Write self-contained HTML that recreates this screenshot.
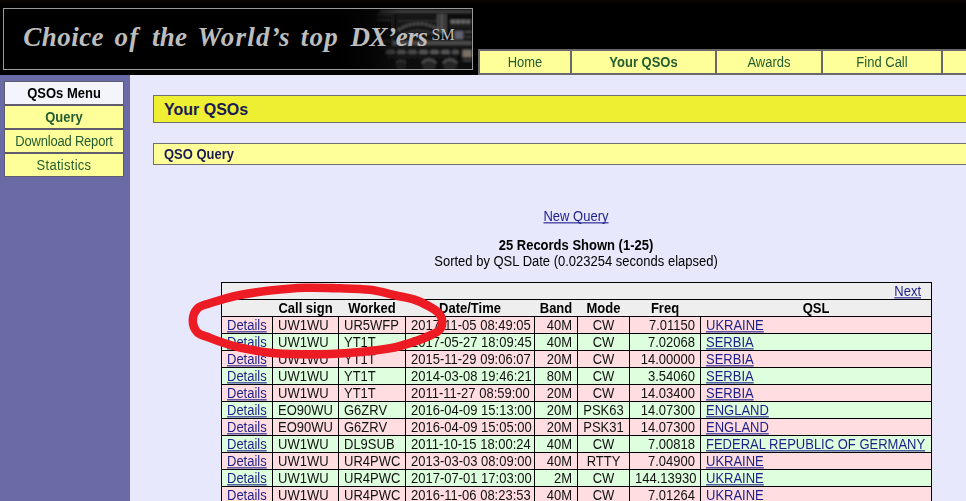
<!DOCTYPE html><html><head><meta charset="utf-8"><style>
*{margin:0;padding:0;box-sizing:border-box}
html,body{width:966px;height:501px;overflow:hidden;background:#E8E8FC;font-family:"Liberation Sans",sans-serif;font-size:13px;color:#000}
.a{position:absolute}
.t{position:absolute;white-space:nowrap;line-height:15px;height:15px;transform:scaleY(1.1);transform-origin:0 0}
.ln{position:absolute;background:#000}
a{color:#1E1E8A;text-decoration:underline;text-decoration-skip-ink:none}
.hw{font-family:"Liberation Serif",serif;font-style:italic;font-weight:bold;font-size:27px;line-height:30px;color:#bdbdbd;white-space:nowrap}
.sm{font-family:"Liberation Serif",serif;font-size:16px;line-height:20px;color:#bdbdbd;white-space:nowrap}
</style></head><body>
<div class="a" style="left:0;top:0;width:966px;height:75px;background:#000"></div>
<div class="a" style="left:0;top:0;width:966px;height:4px;background:linear-gradient(#0d0806,#000)"></div>
<svg class="a" style="left:340px;top:9px" width="132" height="60" viewBox="340 9 132 60">
<defs>
<linearGradient id="fade" x1="0" x2="1"><stop offset="0" stop-color="#000" stop-opacity="1"/><stop offset="0.25" stop-color="#000" stop-opacity="0.6"/><stop offset="0.45" stop-color="#000" stop-opacity="0"/></linearGradient>
<filter id="bl" x="0" y="0" width="1" height="1"><feGaussianBlur stdDeviation="0.9"/></filter>
</defs>
<g filter="url(#bl)">
<rect x="340" y="9" width="132" height="60" fill="#070707"/>
<rect x="372" y="9" width="100" height="60" fill="#101010"/>
<rect x="380" y="10" width="92" height="3" fill="#3a3a3a"/>
<rect x="377" y="14" width="14" height="2" fill="#2e2e2e"/><rect x="377" y="19" width="14" height="2" fill="#2e2e2e"/><rect x="377" y="40" width="14" height="2" fill="#262626"/>
<rect x="392" y="14" width="1.5" height="32" fill="#2e2e2e"/>
<rect x="396" y="15" width="42" height="27" fill="#181818"/>
<path d="M398 21 L436 21" stroke="#404040" stroke-width="1.5" stroke-dasharray="2 2"/>
<path d="M398 30 Q417 18 438 29" stroke="#5a5a5a" stroke-width="2.5" fill="none" stroke-dasharray="2.5 1.5"/>
<path d="M402 35 Q418 27 434 34" stroke="#3a3a3a" stroke-width="1.5" fill="none"/>
<rect x="437.5" y="14" width="1.8" height="19" fill="#5c5c5c"/><rect x="441" y="14" width="1.8" height="19" fill="#666"/><rect x="444.5" y="14" width="1.8" height="19" fill="#555"/>
<rect x="450" y="19.5" width="22" height="5" fill="#2a2a2a"/>
<rect x="451" y="20" width="4" height="3.5" fill="#707070"/><rect x="456" y="20" width="4" height="3.5" fill="#707070"/><rect x="461" y="20" width="4" height="3.5" fill="#6a6a6a"/><rect x="466" y="20" width="4" height="3.5" fill="#666"/>
<path d="M450 27 L472 27" stroke="#505050" stroke-width="1.2" stroke-dasharray="1.5 1.5"/>
<rect x="454.5" y="31" width="9" height="8" fill="#5e5e6e"/>
<rect x="465" y="31" width="7" height="2" fill="#4a4a4a"/><rect x="465" y="36" width="7" height="2" fill="#3a3a3a"/>
<rect x="392" y="41" width="80" height="4" fill="#4a4a4a"/>
<rect x="380" y="46" width="92" height="2" fill="#1c1c1c"/>
<rect x="386" y="50" width="9" height="4" rx="1.5" fill="#454545"/><rect x="397" y="50" width="9" height="4" rx="1.5" fill="#4a4a4a"/><rect x="408" y="50" width="9" height="4" rx="1.5" fill="#4a4a4a"/><rect x="419" y="50" width="9" height="4" rx="1.5" fill="#555"/><rect x="430" y="50" width="9" height="4" rx="1.5" fill="#555"/><rect x="441" y="50" width="9" height="4" rx="1.5" fill="#555"/><rect x="452" y="50" width="7" height="4" rx="1.5" fill="#505050"/>
<path d="M388 57 L456 57" stroke="#303030" stroke-width="1.2" stroke-dasharray="3 2"/>
<circle cx="401" cy="66" r="5" fill="#1e1e1e"/><circle cx="429" cy="66" r="6.5" fill="#262626"/><circle cx="450" cy="66" r="6.5" fill="#262626"/>
<path d="M396 63 Q401 58 406 63" stroke="#3e3e3e" fill="none" stroke-width="1.5"/>
<path d="M422 63 Q429 56 436 63" stroke="#555" fill="none" stroke-width="2"/>
<path d="M443 63 Q450 56 457 63" stroke="#555" fill="none" stroke-width="2"/>
<rect x="462.5" y="50" width="9.5" height="7" fill="#7a7068"/>
<rect x="463" y="59" width="9" height="2.5" fill="#3a3a3a"/>
</g>
<rect x="340" y="9" width="132" height="60" fill="url(#fade)"/>
</svg>
<div class="a" style="left:3px;top:8px;width:470px;height:62px;border:1px solid #9a9a9a"></div>
<div class="a hw" style="left:23.3px;top:22px;letter-spacing:0.46px">Choice</div>
<div class="a hw" style="left:114.6px;top:22px;letter-spacing:1.20px">of</div>
<div class="a hw" style="left:151.9px;top:22px;letter-spacing:0.30px">the</div>
<div class="a hw" style="left:197.4px;top:22px;letter-spacing:1.27px">World’s</div>
<div class="a hw" style="left:300.8px;top:22px;letter-spacing:1.25px">top</div>
<div class="a hw" style="left:350.5px;top:22px;letter-spacing:-0.40px">DX’ers</div>
<div class="a sm" style="left:431.5px;top:25px">SM</div>
<div class="a" style="left:478px;top:49px;width:94px;height:26px;background:#FFFF99;border:2px solid #68686e"></div>
<div class="t" style="left:480px;top:54px;width:90px;text-align:center;color:#245C33;">Home</div>
<div class="a" style="left:570px;top:49px;width:147px;height:26px;background:#FFFF99;border:2px solid #68686e"></div>
<div class="t" style="left:572px;top:54px;width:143px;text-align:center;color:#245C33;font-weight:bold">Your QSOs</div>
<div class="a" style="left:715px;top:49px;width:108px;height:26px;background:#FFFF99;border:2px solid #68686e"></div>
<div class="t" style="left:717px;top:54px;width:104px;text-align:center;color:#245C33;">Awards</div>
<div class="a" style="left:821px;top:49px;width:122px;height:26px;background:#FFFF99;border:2px solid #68686e"></div>
<div class="t" style="left:823px;top:54px;width:118px;text-align:center;color:#245C33;">Find Call</div>
<div class="a" style="left:941px;top:49px;width:111px;height:26px;background:#FFFF99;border:2px solid #68686e"></div>
<div class="a" style="left:0;top:75px;width:130px;height:426px;background:#6A6AA6"></div>
<div class="a" style="left:4px;top:81px;width:120px;height:24px;background:#F4F4FC;border:1px solid #5c5c6c"></div>
<div class="t" style="left:5px;top:85px;width:118px;text-align:center;color:#000;letter-spacing:0.00px;font-weight:bold">QSOs Menu</div>
<div class="a" style="left:4px;top:105px;width:120px;height:24px;background:#FFFF99;border:1px solid #5c5c6c"></div>
<div class="t" style="left:5px;top:109px;width:118px;text-align:center;color:#245C33;letter-spacing:0.00px;font-weight:bold">Query</div>
<div class="a" style="left:4px;top:129px;width:120px;height:24px;background:#FFFF99;border:1px solid #5c5c6c"></div>
<div class="t" style="left:5px;top:133px;width:118px;text-align:center;color:#245C33;letter-spacing:-0.20px;">Download Report</div>
<div class="a" style="left:4px;top:153px;width:120px;height:24px;background:#FFFF99;border:1px solid #5c5c6c"></div>
<div class="t" style="left:5px;top:157px;width:118px;text-align:center;color:#245C33;letter-spacing:0.28px;">Statistics</div>
<div class="a" style="left:153px;top:95px;width:900px;height:28px;background:#EEEE33;border:1px solid #707070"></div>
<div class="t" style="left:164px;top:101px;font-size:16px;line-height:18px;height:18px;font-weight:bold;color:#1a1a55;transform:none">Your QSOs</div>
<div class="a" style="left:153px;top:143px;width:900px;height:22px;background:#FFFF99;border:1px solid #707070"></div>
<div class="t" style="left:164px;top:146px;font-weight:bold;color:#1a1a55">QSO Query</div>
<div class="t" style="left:376px;top:208px;width:400px;text-align:center"><a>New Query</a></div>
<div class="t" style="left:376px;top:237px;width:400px;text-align:center;font-weight:bold">25 Records Shown (1-25)</div>
<div class="t" style="left:376px;top:253px;width:400px;text-align:center">Sorted by QSL Date (0.023254 seconds elapsed)</div>
<div class="a" style="left:221px;top:282px;width:710px;height:34px;background:#EEEEEE"></div>
<div class="a" style="left:221px;top:316px;width:710px;height:17px;background:#FFDDE0"></div>
<div class="a" style="left:221px;top:333px;width:710px;height:17px;background:#DDFFDD"></div>
<div class="a" style="left:221px;top:350px;width:710px;height:17px;background:#FFDDE0"></div>
<div class="a" style="left:221px;top:367px;width:710px;height:17px;background:#DDFFDD"></div>
<div class="a" style="left:221px;top:384px;width:710px;height:17px;background:#FFDDE0"></div>
<div class="a" style="left:221px;top:401px;width:710px;height:17px;background:#DDFFDD"></div>
<div class="a" style="left:221px;top:418px;width:710px;height:17px;background:#FFDDE0"></div>
<div class="a" style="left:221px;top:435px;width:710px;height:17px;background:#DDFFDD"></div>
<div class="a" style="left:221px;top:452px;width:710px;height:17px;background:#FFDDE0"></div>
<div class="a" style="left:221px;top:469px;width:710px;height:17px;background:#DDFFDD"></div>
<div class="a" style="left:221px;top:486px;width:710px;height:17px;background:#FFDDE0"></div>
<div class="ln" style="left:221px;top:282px;width:711px;height:1px"></div>
<div class="ln" style="left:221px;top:299px;width:711px;height:1px"></div>
<div class="ln" style="left:221px;top:316px;width:711px;height:1px"></div>
<div class="ln" style="left:221px;top:333px;width:711px;height:1px"></div>
<div class="ln" style="left:221px;top:350px;width:711px;height:1px"></div>
<div class="ln" style="left:221px;top:367px;width:711px;height:1px"></div>
<div class="ln" style="left:221px;top:384px;width:711px;height:1px"></div>
<div class="ln" style="left:221px;top:401px;width:711px;height:1px"></div>
<div class="ln" style="left:221px;top:418px;width:711px;height:1px"></div>
<div class="ln" style="left:221px;top:435px;width:711px;height:1px"></div>
<div class="ln" style="left:221px;top:452px;width:711px;height:1px"></div>
<div class="ln" style="left:221px;top:469px;width:711px;height:1px"></div>
<div class="ln" style="left:221px;top:486px;width:711px;height:1px"></div>
<div class="ln" style="left:221px;top:503px;width:711px;height:1px"></div>
<div class="ln" style="left:221px;top:282px;width:1px;height:222px"></div>
<div class="ln" style="left:931px;top:282px;width:1px;height:222px"></div>
<div class="ln" style="left:272px;top:316px;width:1px;height:188px"></div>
<div class="ln" style="left:338px;top:316px;width:1px;height:188px"></div>
<div class="ln" style="left:405px;top:316px;width:1px;height:188px"></div>
<div class="ln" style="left:534px;top:316px;width:1px;height:188px"></div>
<div class="ln" style="left:577px;top:316px;width:1px;height:188px"></div>
<div class="ln" style="left:629px;top:316px;width:1px;height:188px"></div>
<div class="ln" style="left:700px;top:316px;width:1px;height:188px"></div>
<div class="t" style="left:800px;top:283px;width:121px;text-align:right"><a>Next</a></div>
<div class="t" style="left:273px;top:300px;width:65px;text-align:center;font-weight:bold">Call sign</div>
<div class="t" style="left:339px;top:300px;width:66px;text-align:center;font-weight:bold">Worked</div>
<div class="t" style="left:406px;top:300px;width:128px;text-align:center;font-weight:bold">Date/Time</div>
<div class="t" style="left:535px;top:300px;width:42px;text-align:center;font-weight:bold">Band</div>
<div class="t" style="left:578px;top:300px;width:51px;text-align:center;font-weight:bold">Mode</div>
<div class="t" style="left:630px;top:300px;width:70px;text-align:center;font-weight:bold">Freq</div>
<div class="t" style="left:701px;top:300px;width:230px;text-align:center;font-weight:bold">QSL</div>
<div class="t" style="left:222px;top:317px;width:50px;padding:0 5px;text-align:left;color:#111"><a>Details</a></div>
<div class="t" style="left:273px;top:317px;width:65px;padding:0 5px;text-align:left;color:#111">UW1WU</div>
<div class="t" style="left:339px;top:317px;width:66px;padding:0 5px;text-align:left;color:#111">UR5WFP</div>
<div class="t" style="left:406px;top:317px;width:128px;padding:0 5px;text-align:left;color:#111">2017-11-05 08:49:05</div>
<div class="t" style="left:535px;top:317px;width:42px;padding:0 5px;text-align:right;color:#111">40M</div>
<div class="t" style="left:578px;top:317px;width:51px;padding:0 5px;text-align:center;color:#111">CW</div>
<div class="t" style="left:630px;top:317px;width:70px;padding:0 5px;text-align:right;color:#111">7.01150</div>
<div class="t" style="left:701px;top:317px;width:230px;padding:0 5px;text-align:left;color:#111"><a>UKRAINE</a></div>
<div class="t" style="left:222px;top:334px;width:50px;padding:0 5px;text-align:left;color:#111"><a>Details</a></div>
<div class="t" style="left:273px;top:334px;width:65px;padding:0 5px;text-align:left;color:#111">UW1WU</div>
<div class="t" style="left:339px;top:334px;width:66px;padding:0 5px;text-align:left;color:#111">YT1T</div>
<div class="t" style="left:406px;top:334px;width:128px;padding:0 5px;text-align:left;color:#111">2017-05-27 18:09:45</div>
<div class="t" style="left:535px;top:334px;width:42px;padding:0 5px;text-align:right;color:#111">40M</div>
<div class="t" style="left:578px;top:334px;width:51px;padding:0 5px;text-align:center;color:#111">CW</div>
<div class="t" style="left:630px;top:334px;width:70px;padding:0 5px;text-align:right;color:#111">7.02068</div>
<div class="t" style="left:701px;top:334px;width:230px;padding:0 5px;text-align:left;color:#111"><a>SERBIA</a></div>
<div class="t" style="left:222px;top:351px;width:50px;padding:0 5px;text-align:left;color:#111"><a>Details</a></div>
<div class="t" style="left:273px;top:351px;width:65px;padding:0 5px;text-align:left;color:#111">UW1WU</div>
<div class="t" style="left:339px;top:351px;width:66px;padding:0 5px;text-align:left;color:#111">YT1T</div>
<div class="t" style="left:406px;top:351px;width:128px;padding:0 5px;text-align:left;color:#111">2015-11-29 09:06:07</div>
<div class="t" style="left:535px;top:351px;width:42px;padding:0 5px;text-align:right;color:#111">20M</div>
<div class="t" style="left:578px;top:351px;width:51px;padding:0 5px;text-align:center;color:#111">CW</div>
<div class="t" style="left:630px;top:351px;width:70px;padding:0 5px;text-align:right;color:#111">14.00000</div>
<div class="t" style="left:701px;top:351px;width:230px;padding:0 5px;text-align:left;color:#111"><a>SERBIA</a></div>
<div class="t" style="left:222px;top:368px;width:50px;padding:0 5px;text-align:left;color:#111"><a>Details</a></div>
<div class="t" style="left:273px;top:368px;width:65px;padding:0 5px;text-align:left;color:#111">UW1WU</div>
<div class="t" style="left:339px;top:368px;width:66px;padding:0 5px;text-align:left;color:#111">YT1T</div>
<div class="t" style="left:406px;top:368px;width:128px;padding:0 5px;text-align:left;color:#111">2014-03-08 19:46:21</div>
<div class="t" style="left:535px;top:368px;width:42px;padding:0 5px;text-align:right;color:#111">80M</div>
<div class="t" style="left:578px;top:368px;width:51px;padding:0 5px;text-align:center;color:#111">CW</div>
<div class="t" style="left:630px;top:368px;width:70px;padding:0 5px;text-align:right;color:#111">3.54060</div>
<div class="t" style="left:701px;top:368px;width:230px;padding:0 5px;text-align:left;color:#111"><a>SERBIA</a></div>
<div class="t" style="left:222px;top:385px;width:50px;padding:0 5px;text-align:left;color:#111"><a>Details</a></div>
<div class="t" style="left:273px;top:385px;width:65px;padding:0 5px;text-align:left;color:#111">UW1WU</div>
<div class="t" style="left:339px;top:385px;width:66px;padding:0 5px;text-align:left;color:#111">YT1T</div>
<div class="t" style="left:406px;top:385px;width:128px;padding:0 5px;text-align:left;color:#111">2011-11-27 08:59:00</div>
<div class="t" style="left:535px;top:385px;width:42px;padding:0 5px;text-align:right;color:#111">20M</div>
<div class="t" style="left:578px;top:385px;width:51px;padding:0 5px;text-align:center;color:#111">CW</div>
<div class="t" style="left:630px;top:385px;width:70px;padding:0 5px;text-align:right;color:#111">14.03400</div>
<div class="t" style="left:701px;top:385px;width:230px;padding:0 5px;text-align:left;color:#111"><a>SERBIA</a></div>
<div class="t" style="left:222px;top:402px;width:50px;padding:0 5px;text-align:left;color:#111"><a>Details</a></div>
<div class="t" style="left:273px;top:402px;width:65px;padding:0 5px;text-align:left;color:#111">EO90WU</div>
<div class="t" style="left:339px;top:402px;width:66px;padding:0 5px;text-align:left;color:#111">G6ZRV</div>
<div class="t" style="left:406px;top:402px;width:128px;padding:0 5px;text-align:left;color:#111">2016-04-09 15:13:00</div>
<div class="t" style="left:535px;top:402px;width:42px;padding:0 5px;text-align:right;color:#111">20M</div>
<div class="t" style="left:578px;top:402px;width:51px;padding:0 5px;text-align:center;color:#111">PSK63</div>
<div class="t" style="left:630px;top:402px;width:70px;padding:0 5px;text-align:right;color:#111">14.07300</div>
<div class="t" style="left:701px;top:402px;width:230px;padding:0 5px;text-align:left;color:#111"><a>ENGLAND</a></div>
<div class="t" style="left:222px;top:419px;width:50px;padding:0 5px;text-align:left;color:#111"><a>Details</a></div>
<div class="t" style="left:273px;top:419px;width:65px;padding:0 5px;text-align:left;color:#111">EO90WU</div>
<div class="t" style="left:339px;top:419px;width:66px;padding:0 5px;text-align:left;color:#111">G6ZRV</div>
<div class="t" style="left:406px;top:419px;width:128px;padding:0 5px;text-align:left;color:#111">2016-04-09 15:05:00</div>
<div class="t" style="left:535px;top:419px;width:42px;padding:0 5px;text-align:right;color:#111">20M</div>
<div class="t" style="left:578px;top:419px;width:51px;padding:0 5px;text-align:center;color:#111">PSK31</div>
<div class="t" style="left:630px;top:419px;width:70px;padding:0 5px;text-align:right;color:#111">14.07300</div>
<div class="t" style="left:701px;top:419px;width:230px;padding:0 5px;text-align:left;color:#111"><a>ENGLAND</a></div>
<div class="t" style="left:222px;top:436px;width:50px;padding:0 5px;text-align:left;color:#111"><a>Details</a></div>
<div class="t" style="left:273px;top:436px;width:65px;padding:0 5px;text-align:left;color:#111">UW1WU</div>
<div class="t" style="left:339px;top:436px;width:66px;padding:0 5px;text-align:left;color:#111">DL9SUB</div>
<div class="t" style="left:406px;top:436px;width:128px;padding:0 5px;text-align:left;color:#111">2011-10-15 18:00:24</div>
<div class="t" style="left:535px;top:436px;width:42px;padding:0 5px;text-align:right;color:#111">40M</div>
<div class="t" style="left:578px;top:436px;width:51px;padding:0 5px;text-align:center;color:#111">CW</div>
<div class="t" style="left:630px;top:436px;width:70px;padding:0 5px;text-align:right;color:#111">7.00818</div>
<div class="t" style="left:701px;top:436px;width:230px;padding:0 5px;text-align:left;color:#111"><a>FEDERAL REPUBLIC OF GERMANY</a></div>
<div class="t" style="left:222px;top:453px;width:50px;padding:0 5px;text-align:left;color:#111"><a>Details</a></div>
<div class="t" style="left:273px;top:453px;width:65px;padding:0 5px;text-align:left;color:#111">UW1WU</div>
<div class="t" style="left:339px;top:453px;width:66px;padding:0 5px;text-align:left;color:#111">UR4PWC</div>
<div class="t" style="left:406px;top:453px;width:128px;padding:0 5px;text-align:left;color:#111">2013-03-03 08:09:00</div>
<div class="t" style="left:535px;top:453px;width:42px;padding:0 5px;text-align:right;color:#111">40M</div>
<div class="t" style="left:578px;top:453px;width:51px;padding:0 5px;text-align:center;color:#111">RTTY</div>
<div class="t" style="left:630px;top:453px;width:70px;padding:0 5px;text-align:right;color:#111">7.04900</div>
<div class="t" style="left:701px;top:453px;width:230px;padding:0 5px;text-align:left;color:#111"><a>UKRAINE</a></div>
<div class="t" style="left:222px;top:470px;width:50px;padding:0 5px;text-align:left;color:#111"><a>Details</a></div>
<div class="t" style="left:273px;top:470px;width:65px;padding:0 5px;text-align:left;color:#111">UW1WU</div>
<div class="t" style="left:339px;top:470px;width:66px;padding:0 5px;text-align:left;color:#111">UR4PWC</div>
<div class="t" style="left:406px;top:470px;width:128px;padding:0 5px;text-align:left;color:#111">2017-07-01 17:03:00</div>
<div class="t" style="left:535px;top:470px;width:42px;padding:0 5px;text-align:right;color:#111">2M</div>
<div class="t" style="left:578px;top:470px;width:51px;padding:0 5px;text-align:center;color:#111">CW</div>
<div class="t" style="left:630px;top:470px;width:70px;padding:0 5px;text-align:right;color:#111">144.13930</div>
<div class="t" style="left:701px;top:470px;width:230px;padding:0 5px;text-align:left;color:#111"><a>UKRAINE</a></div>
<div class="t" style="left:222px;top:487px;width:50px;padding:0 5px;text-align:left;color:#111"><a>Details</a></div>
<div class="t" style="left:273px;top:487px;width:65px;padding:0 5px;text-align:left;color:#111">UW1WU</div>
<div class="t" style="left:339px;top:487px;width:66px;padding:0 5px;text-align:left;color:#111">UR4PWC</div>
<div class="t" style="left:406px;top:487px;width:128px;padding:0 5px;text-align:left;color:#111">2016-11-06 08:23:53</div>
<div class="t" style="left:535px;top:487px;width:42px;padding:0 5px;text-align:right;color:#111">40M</div>
<div class="t" style="left:578px;top:487px;width:51px;padding:0 5px;text-align:center;color:#111">CW</div>
<div class="t" style="left:630px;top:487px;width:70px;padding:0 5px;text-align:right;color:#111">7.01264</div>
<div class="t" style="left:701px;top:487px;width:230px;padding:0 5px;text-align:left;color:#111"><a>UKRAINE</a></div>
<svg class="a" style="left:0;top:0" width="966" height="501"><path d="M192.8 320.5 C192.8 316.5 194.8 311.3 197.5 308.5 C200.2 305.7 205.1 304.9 209.0 303.5 C212.9 302.1 215.8 301.2 221.0 299.8 C226.2 298.4 231.8 296.5 240.0 295.0 C248.2 293.5 259.2 291.8 270.0 290.6 C280.8 289.4 293.3 288.2 305.0 287.8 C316.7 287.4 329.2 288.0 340.0 288.3 C350.8 288.6 360.8 288.7 370.0 289.8 C379.2 290.9 387.5 293.5 395.0 295.2 C402.5 296.9 409.2 297.9 415.0 299.8 C420.8 301.7 426.3 304.9 430.0 306.8 C433.7 308.8 435.2 309.9 437.0 311.5 C438.8 313.1 440.1 314.7 441.0 316.5 C441.9 318.3 442.2 320.6 442.2 322.5 C442.2 324.4 441.9 326.4 441.0 328.0 C440.1 329.6 438.8 330.8 437.0 332.0 C435.2 333.2 432.8 334.2 430.0 335.5 C427.2 336.8 424.2 338.1 420.0 339.6 C415.8 341.1 410.0 343.1 405.0 344.5 C400.0 345.9 397.5 347.1 390.0 348.3 C382.5 349.6 370.0 351.1 360.0 352.0 C350.0 352.9 340.0 353.6 330.0 354.0 C320.0 354.4 310.0 354.4 300.0 354.2 C290.0 354.0 280.0 353.8 270.0 352.7 C260.0 351.6 248.2 349.3 240.0 347.5 C231.8 345.7 226.2 343.7 221.0 342.0 C215.8 340.3 212.9 339.1 209.0 337.5 C205.1 335.9 200.2 335.3 197.5 332.5 C194.8 329.7 192.8 324.5 192.8 320.5 Z" fill="none" stroke="#ED1C24" stroke-width="8.6"/></svg>
</body></html>
